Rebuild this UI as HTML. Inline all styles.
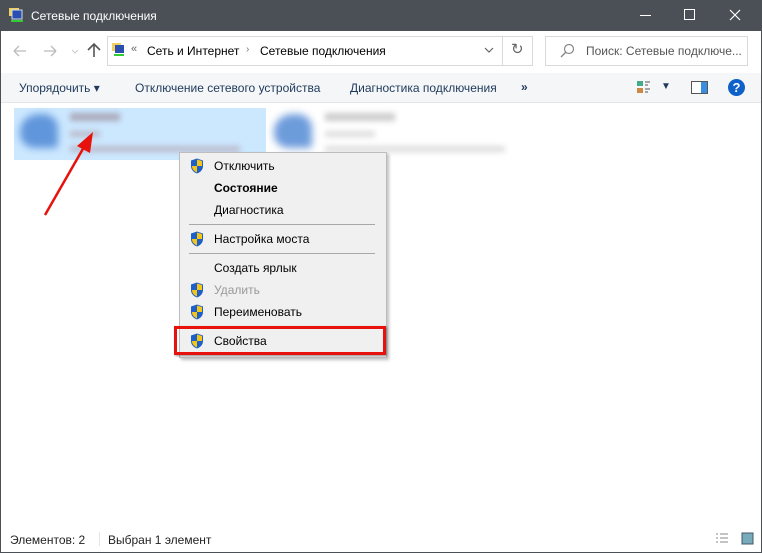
<!DOCTYPE html>
<html><head><meta charset="utf-8"><style>
*{margin:0;padding:0;box-sizing:border-box}
body{width:762px;height:553px;overflow:hidden;background:#fff;font-family:"Liberation Sans",sans-serif;font-size:12px;color:#000;position:relative}
.abs{position:absolute}
.win{position:absolute;left:0;top:0;width:762px;height:553px;border:1px solid #4a5056}
.title{left:0;top:0;width:762px;height:31px;background:#4a5056;color:#fff}
.t{position:absolute;white-space:nowrap}
.mi{position:absolute;left:214px;font-size:12px;white-space:nowrap}
.sh{position:absolute;left:190px;width:14px;height:16px}
</style></head><body>
<div class="win"></div>
<div class="abs title">
 <svg class="abs" style="left:8px;top:7px" width="17" height="17"><rect x="1" y="1" width="10" height="8" fill="#f0d060"/><rect x="4" y="3" width="10" height="9" fill="#2a4fb0" stroke="#cde" /><rect x="3" y="13" width="12" height="2" fill="#3c3"/></svg>
 <div class="t" style="left:31px;top:9px;font-size:12px">Сетевые подключения</div>
 <div class="abs" style="left:640px;top:15px;width:11px;height:1px;background:#fff"></div>
 <div class="abs" style="left:684px;top:9px;width:11px;height:11px;border:1px solid #fff"></div>
 <svg class="abs" style="left:729px;top:9px" width="12" height="12"><path d="M1 1L11 11M11 1L1 11" stroke="#fff" stroke-width="1.2"/></svg>
</div>
<svg class="abs" style="left:12px;top:44px" width="70" height="14"><path d="M2 7h12M2 7l5-5M2 7l5 5" stroke="#bbb" fill="none" stroke-width="1.3"/><path d="M32 7h12M44 7l-5-5M44 7l-5 5" stroke="#bbb" fill="none" stroke-width="1.3"/><path d="M60 6l3 3 3-3" stroke="#ccc" fill="none"/></svg>
<svg class="abs" style="left:87px;top:42px" width="14" height="16"><path d="M7 15V2M1 8l6-6 6 6" stroke="#555" fill="none" stroke-width="1.6"/></svg>
<div class="abs" style="left:107px;top:36px;width:396px;height:30px;border:1px solid #d9d9d9"></div>
<div class="abs" style="left:502px;top:36px;width:31px;height:30px;border:1px solid #d9d9d9"></div>
<svg class="abs" style="left:111px;top:42px" width="16" height="16"><rect x="1" y="1" width="9" height="8" fill="#f0d060"/><rect x="4" y="3" width="9" height="8" fill="#2a4fb0"/><rect x="3" y="12" width="10" height="2" fill="#3c3"/></svg>
<div class="t" style="left:131px;top:43px;color:#666;font-size:11px">«</div>
<div class="t" style="left:147px;top:44px">Сеть и Интернет</div>
<div class="t" style="left:246px;top:44px;color:#777;font-size:10px">›</div>
<div class="t" style="left:260px;top:44px">Сетевые подключения</div>
<svg class="abs" style="left:484px;top:47px" width="10" height="7"><path d="M1 1l4 4 4-4" stroke="#666" fill="none" stroke-width="1.2"/></svg>
<div class="t" style="left:511px;top:40px;color:#666;font-size:15px">↻</div>
<div class="abs" style="left:545px;top:36px;width:203px;height:30px;border:1px solid #d9d9d9"></div>
<svg class="abs" style="left:559px;top:43px" width="16" height="16"><circle cx="10" cy="6" r="4.5" stroke="#888" fill="none" stroke-width="1.2"/><path d="M7 9L2 14" stroke="#888" stroke-width="1.4"/></svg>
<div class="t" style="left:586px;top:44px;color:#555">Поиск: Сетевые подключе...</div>
<div class="abs" style="left:1px;top:73px;width:760px;height:30px;background:#f5f6f7;border-bottom:1px solid #e5e5e5"></div>
<div class="t" style="left:19px;top:81px;color:#1e395b">Упорядочить ▾</div>
<div class="t" style="left:135px;top:81px;color:#1e395b">Отключение сетевого устройства</div>
<div class="t" style="left:350px;top:81px;color:#1e395b">Диагностика подключения</div>
<div class="t" style="left:521px;top:80px;color:#1e395b;font-weight:bold">»</div>
<svg class="abs" style="left:636px;top:80px" width="16" height="16"><rect x="1" y="1" width="6" height="5" fill="#4a8"/><rect x="1" y="8" width="6" height="5" fill="#c84"/><path d="M9 2h5M9 5h3M9 9h5M9 12h3" stroke="#555"/></svg>
<div class="t" style="left:661px;top:81px;color:#1e395b;font-size:10px">▼</div>
<svg class="abs" style="left:691px;top:81px" width="18" height="14"><rect x="0.5" y="0.5" width="16" height="12" fill="#fff" stroke="#555"/><rect x="10" y="1" width="6" height="11" fill="#3a8de0"/></svg>
<div class="abs" style="left:728px;top:79px;width:17px;height:17px;border-radius:50%;background:#0d61c9;color:#fff;font-weight:bold;text-align:center;line-height:17px;font-size:13px">?</div>
<div class="abs" style="left:14px;top:108px;width:252px;height:52px;background:#cce8ff"></div>
<div class="abs" style="left:20px;top:114px;width:38px;height:34px;background:#3d7bd0;border-radius:50% 40% 10% 40%;filter:blur(4px);opacity:.75"></div>
<div class="abs" style="left:70px;top:113px;width:50px;height:8px;background:#aab;filter:blur(3px)"></div>
<div class="abs" style="left:70px;top:131px;width:30px;height:6px;background:#bbc;filter:blur(3px)"></div>
<div class="abs" style="left:70px;top:146px;width:170px;height:6px;background:#bbc;filter:blur(3px)"></div>
<div class="abs" style="left:274px;top:114px;width:38px;height:34px;background:#3d7bd0;border-radius:50% 40% 10% 40%;filter:blur(4px);opacity:.75"></div>
<div class="abs" style="left:325px;top:113px;width:70px;height:8px;background:#ccc;filter:blur(3px)"></div>
<div class="abs" style="left:325px;top:131px;width:50px;height:6px;background:#ddd;filter:blur(3px)"></div>
<div class="abs" style="left:325px;top:146px;width:180px;height:6px;background:#ddd;filter:blur(3px)"></div>
<div class="abs" style="left:179px;top:152px;width:208px;height:206px;background:#f0f0f0;border:1px solid #bdbdbd;box-shadow:2px 2px 3px rgba(0,0,0,.25)"></div>
<div class="abs" style="left:189px;top:224px;width:186px;height:1px;background:#a8a8a8"></div>
<div class="abs" style="left:189px;top:253px;width:186px;height:1px;background:#a8a8a8"></div>
<svg width="0" height="0" style="position:absolute"><defs><symbol id="sh" viewBox="0 0 14 16"><path d="M7 0.5L13 2.5V8c0 4-3 6.5-6 7.5C4 14.5 1 12 1 8V2.5Z" fill="#1e5fc8"/><path d="M7 1.5V8H12V3Z" fill="#f5c518"/><path d="M7 8V14.5C4.5 13.5 2 11.5 2 8Z" fill="#f5c518"/></symbol></defs></svg>
<svg class="sh" style="top:158px"><use href="#sh"/></svg>
<div class="mi" style="top:159px">Отключить</div>
<div class="mi" style="top:181px;font-weight:bold">Состояние</div>
<div class="mi" style="top:203px">Диагностика</div>
<svg class="sh" style="top:231px"><use href="#sh"/></svg>
<div class="mi" style="top:232px">Настройка моста</div>
<div class="mi" style="top:261px">Создать ярлык</div>
<svg class="sh" style="top:282px"><use href="#sh"/></svg>
<div class="mi" style="top:283px;color:#999">Удалить</div>
<svg class="sh" style="top:304px"><use href="#sh"/></svg>
<div class="mi" style="top:305px">Переименовать</div>
<svg class="sh" style="top:333px"><use href="#sh"/></svg>
<div class="mi" style="top:334px">Свойства</div>
<div class="abs" style="left:174px;top:326px;width:212px;height:29px;border:3px solid #e8120c;box-shadow:1px 1px 2px rgba(0,0,0,.4)"></div>
<svg class="abs" style="left:0;top:0" width="762" height="553"><line x1="45" y1="215" x2="84" y2="147" stroke="#e8120c" stroke-width="2.5"/><path d="M93 132L90 153L77 146Z" fill="#e8120c"/></svg>
<div class="t" style="left:10px;top:533px;color:#222">Элементов: 2</div>
<div class="abs" style="left:99px;top:532px;width:1px;height:14px;background:#e5e5e5"></div>
<div class="t" style="left:108px;top:533px;color:#222">Выбран 1 элемент</div>
<svg class="abs" style="left:715px;top:532px" width="40" height="14"><path d="M1 2h2M1 6h2M1 10h2M5 2h8M5 6h8M5 10h8" stroke="#888"/><rect x="27" y="1" width="11" height="11" fill="#7ab" stroke="#456"/></svg>
</body></html>
